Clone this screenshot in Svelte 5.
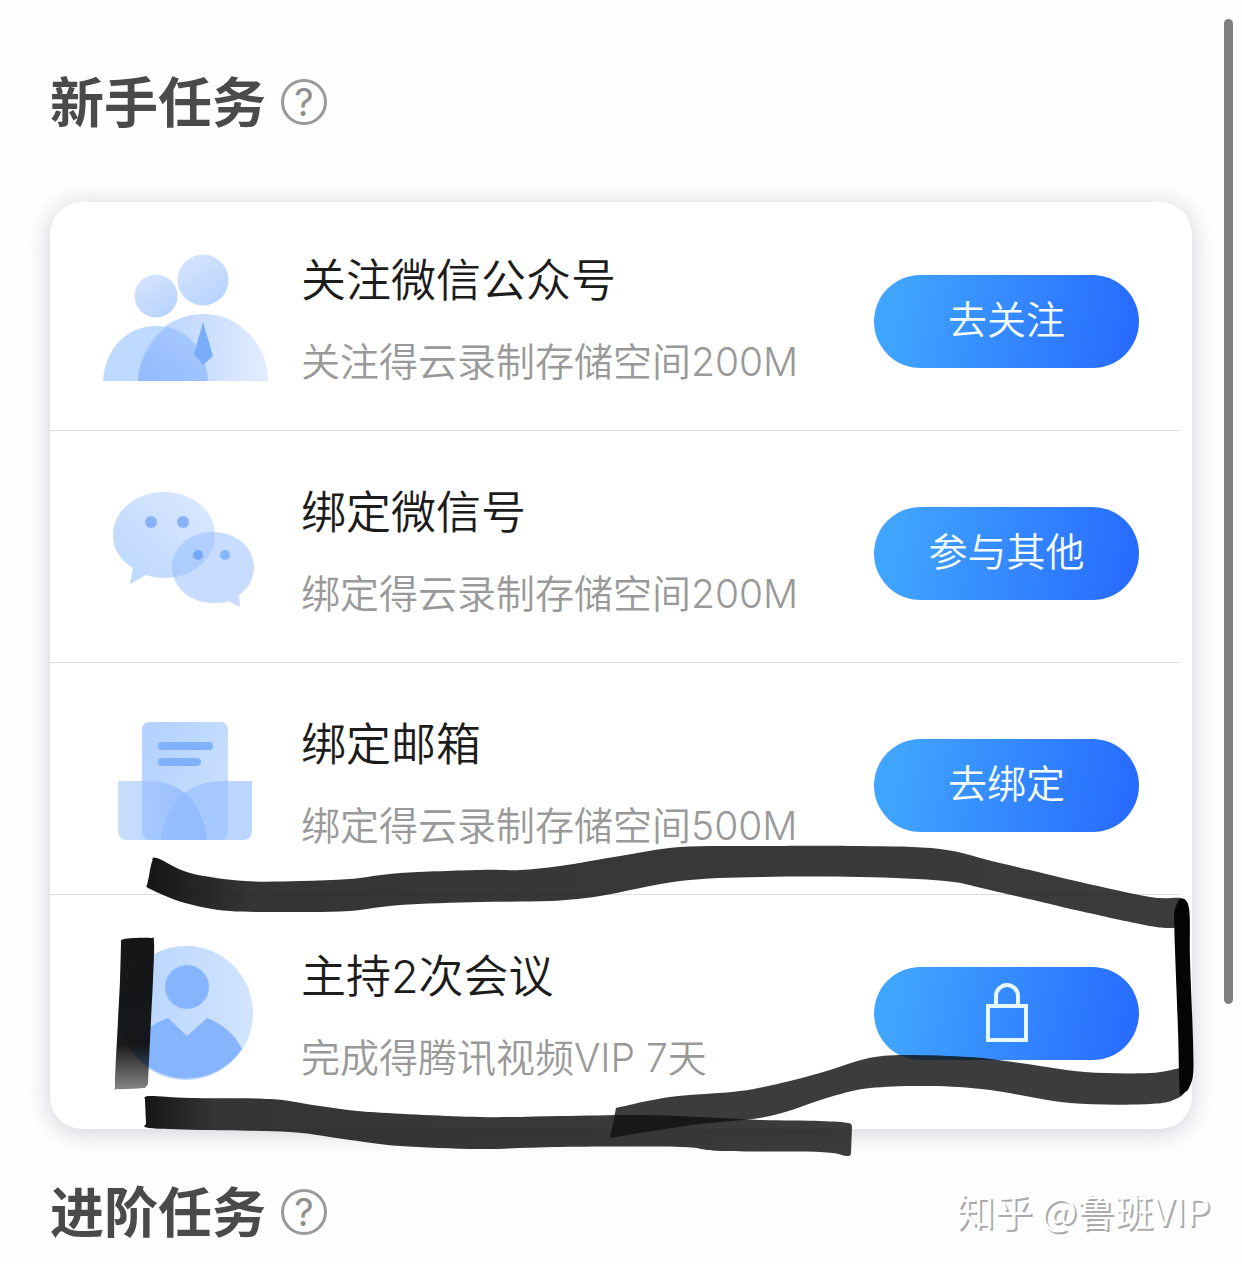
<script lang="ts">
    type Task = {
        icon: "follow" | "wechat" | "mail" | "host";
        title: string;
        reward: string;
        action: string;
        locked?: boolean;
    };

    type Point = [number, number];

    const tasks: Task[] = [
        { icon: "follow", title: "关注微信公众号", reward: "关注得云录制存储空间200M", action: "去关注" },
        { icon: "wechat", title: "绑定微信号", reward: "绑定得云录制存储空间200M", action: "参与其他" },
        { icon: "mail", title: "绑定邮箱", reward: "绑定得云录制存储空间500M", action: "去绑定" },
        { icon: "host", title: "主持2次会议", reward: "完成得腾讯视频VIP 7天", action: "未解锁", locked: true },
    ];

    // runs a smooth curve through all the points of one edge
    function curve(points: Point[]) {
        let d = "";
        for (let i = 0; i < points.length - 1; i++) {
            const a = points[i - 1] ?? points[i];
            const b = points[i];
            const c = points[i + 1];
            const e = points[i + 2] ?? c;
            d += ` C ${b[0] + (c[0] - a[0]) / 6} ${b[1] + (c[1] - a[1]) / 6}`;
            d += ` ${c[0] - (e[0] - b[0]) / 6} ${c[1] - (e[1] - b[1]) / 6} ${c[0]} ${c[1]}`;
        }
        return d;
    }

    // a marker stroke is the area between two edges, there and back
    function stroke(there: Point[], back: Point[]) {
        return `M ${there[0].join(" ")}${curve(there)} L ${back[0].join(" ")}${curve(back)} Z`;
    }

    const topStroke = stroke(
        [[149, 876], [152, 862], [157, 858], [190, 873], [245, 881], [300, 881], [350, 879], [400, 873], [480, 870], [520, 870], [560, 866], [620, 856], [680, 847], [760, 846], [860, 846], [940, 849], [1000, 863], [1080, 882], [1150, 897], [1181, 898], [1188, 905]],
        [[1174, 928], [1150, 926], [1080, 911], [990, 890], [945, 881], [860, 877], [760, 877], [680, 881], [600, 896], [550, 901], [480, 902], [400, 905], [350, 911], [300, 912], [230, 911], [185, 903], [150, 889], [147, 885]],
    );
    const rightStroke = stroke(
        [[1174, 912], [1180, 899], [1189, 908], [1190, 960], [1193, 1040], [1193, 1075], [1188, 1090]],
        [[1180, 1096], [1179, 1072], [1178, 1030], [1175, 950], [1174, 912]],
    );
    const lowerStroke = stroke(
        [[1180, 1068], [1150, 1073], [1085, 1072], [1020, 1063], [970, 1057], [900, 1055], [865, 1059], [830, 1070], [790, 1081], [740, 1091], [670, 1097], [616, 1108]],
        [[610, 1138], [640, 1133], [700, 1124], [770, 1116], [830, 1097], [870, 1088], [930, 1086], [990, 1090], [1070, 1103], [1150, 1104], [1178, 1098], [1189, 1086]],
    );
    const bottomStroke = stroke(
        [[145, 1100], [149, 1096], [190, 1098], [270, 1099], [320, 1106], [370, 1112], [480, 1117], [560, 1116], [640, 1115], [700, 1117], [760, 1120], [820, 1121], [848, 1123], [852, 1127]],
        [[851, 1153], [847, 1156], [820, 1152], [720, 1151], [680, 1147], [560, 1147], [480, 1149], [400, 1146], [350, 1140], [290, 1132], [200, 1130], [149, 1128], [146, 1124]],
    );
    const leftStroke = stroke(
        [[121, 943], [124, 939], [150, 938], [154, 942], [153, 980], [150, 1040], [148, 1084]],
        [[145, 1088], [118, 1089], [115, 1084], [118, 1020], [120, 980], [121, 943]],
    );
</script>

{#snippet heading(text: string)}
    <header class="heading">
        <h2>{text}</h2>
        <button class="help" aria-label="{text}说明">?</button>
    </header>
{/snippet}

{#snippet taskIcon(name: Task["icon"])}
    <svg class="icon" viewBox="0 0 180 152" aria-hidden="true">
        {#if name === "follow"}
            <circle cx="61" cy="51" r="21.5" fill="url(#soft)" />
            <circle cx="108" cy="35" r="25.5" fill="url(#soft)" />
            <path d="M8 136 C10 103 32 81 61 81 C90 81 111 103 113 136 Z" fill="#bfdaff" />
            <path d="M43 136 A65 67 0 0 1 173 136 Z" fill="url(#body)" />
            <path
                d="M43 136 C44 114 56 95 71 82 C95 86 111 106 113 136 Z"
                fill="url(#overlap)"
            />
            <path d="M108 77 L99 109 L108 120 L118 111 Z" fill="#79adfb" />
        {:else if name === "wechat"}
            <path
                d="M69 15 C98 15 120 34 120 58 C120 82 98 101 69 101 C63 101 57 100 51 98 L35 107 L38 91 C25 83 18 72 18 58 C18 34 41 15 69 15 Z"
                fill="url(#bubble)"
            />
            <path
                d="M118 55 C141 55 159 71 159 90 C159 102 153 112 144 118 L145 130 L133 124 C128 126 123 126 118 126 C95 126 77 110 77 90 C77 71 95 55 118 55 Z"
                fill="#8fbaff"
                fill-opacity="0.5"
            />
            <circle cx="56" cy="45" r="6" fill="#86b3fb" />
            <circle cx="88" cy="45" r="6" fill="#86b3fb" />
            <circle cx="103" cy="78" r="5" fill="#76a8fa" />
            <circle cx="130" cy="78" r="5" fill="#86b5fb" />
        {:else if name === "mail"}
            <rect x="47" y="13" width="86" height="118" rx="7" fill="url(#sheet)" />
            <path d="M67 37 H114 M67 53 H102" stroke="#7fb2fa" stroke-width="8" stroke-linecap="round" />
            <path
                d="M23 72 H52 C68 72 80 76 90 84 C101 93 110 109 112 131 H32 Q23 131 23 122 Z"
                fill="url(#flap)"
                fill-opacity="0.6"
            />
            <path
                d="M157 72 H128 C112 72 100 76 90 84 C77 94 68 111 66 131 H148 Q157 131 157 122 Z"
                fill="#8fbaff"
                fill-opacity="0.6"
            />
        {:else}
            <circle cx="91" cy="72" r="67" fill="url(#disc)" />
            <circle cx="92" cy="46" r="22" fill="#86b5fe" />
            <path
                d="M73 77 L92 95 L112 77 C128 83 140 94 147 108 A67 67 0 0 1 36 108 C43 94 56 83 73 77 Z"
                fill="#86b5fe"
            />
        {/if}
    </svg>
{/snippet}

<svg class="defs" aria-hidden="true">
    <defs>
        <linearGradient id="soft" x1="0" y1="0" x2="0.6" y2="1">
            <stop offset="0" stop-color="#d8e6fd" />
            <stop offset="1" stop-color="#b9d4fd" />
        </linearGradient>
        <linearGradient id="body">
            <stop offset="0" stop-color="#b4d0ff" />
            <stop offset="0.6" stop-color="#cfe1ff" />
            <stop offset="1" stop-color="#e2ecff" />
        </linearGradient>
        <linearGradient id="overlap" x1="0" y1="1" x2="1" y2="0">
            <stop offset="0" stop-color="#94baff" />
            <stop offset="1" stop-color="#a9cbfd" />
        </linearGradient>
        <linearGradient id="bubble" x1="1" y1="0" x2="0" y2="1">
            <stop offset="0" stop-color="#dde9ff" />
            <stop offset="1" stop-color="#bad6ff" />
        </linearGradient>
        <linearGradient id="sheet" x1="0" y1="0" x2="1" y2="0.6">
            <stop offset="0" stop-color="#b0d0ff" />
            <stop offset="1" stop-color="#cadfff" />
        </linearGradient>
        <linearGradient id="flap">
            <stop offset="0" stop-color="#a6cbff" />
            <stop offset="1" stop-color="#7ba7ff" />
        </linearGradient>
        <linearGradient id="disc">
            <stop offset="0" stop-color="#b5d3ff" />
            <stop offset="1" stop-color="#d2e4ff" />
        </linearGradient>
    </defs>
</svg>

<main class="page">
    {@render heading("新手任务")}

    <ul class="card">
        {#each tasks as task (task.title)}
            <li class="task">
                {@render taskIcon(task.icon)}
                <div class="info">
                    <h3>{task.title}</h3>
                    <p>{task.reward}</p>
                </div>
                <button class={["action", task.locked && "locked"]} aria-label={task.action}>
                    {#if task.locked}
                        <svg class="lock" viewBox="0 0 44 60" aria-hidden="true">
                            <path d="M11 23 V13 A11 11 0 0 1 33 13 V23" />
                            <rect x="3" y="23" width="38" height="34" />
                        </svg>
                    {:else}
                        {task.action}
                    {/if}
                </button>
            </li>
        {/each}
    </ul>

    {@render heading("进阶任务")}

    <svg class="marker" viewBox="0 0 1242 1264" aria-hidden="true">
        <defs>
            <linearGradient id="ink">
                <stop offset="0" stop-color="#111" stop-opacity="0.98" />
                <stop offset="0.1" stop-color="#111" stop-opacity="0.85" />
                <stop offset="1" stop-color="#111" stop-opacity="0.82" />
            </linearGradient>
            <linearGradient id="bar" x1="0" y1="0" x2="0" y2="1">
                <stop offset="0" stop-color="#0c0c0c" stop-opacity="0.96" />
                <stop offset="0.7" stop-color="#0c0c0c" stop-opacity="0.94" />
                <stop offset="1" stop-color="#111" stop-opacity="0.5" />
            </linearGradient>
        </defs>
        <path d={topStroke} fill="url(#ink)" />
        <path d={lowerStroke} fill="#111" fill-opacity="0.82" />
        <path d={bottomStroke} fill="url(#ink)" />
        <path d={leftStroke} fill="url(#bar)" />
        <path d={rightStroke} fill="#050505" />
    </svg>

    <div class="scrollbar"></div>
    <div class="watermark">知乎 @鲁班VIP</div>
</main>

<style>
    :global(body) {
        margin: 0;
        background: #fefefe;
    }

    .page {
        position: relative;
        box-sizing: border-box;
        padding: 64px 50px 14px;
        font-family: Inter, "Noto Sans CJK SC", sans-serif;
    }

    .defs {
        position: absolute;
        width: 0;
        height: 0;
    }

    .heading {
        display: flex;
        align-items: center;
        gap: 15px;
        height: 76px;
    }

    h2,
    h3,
    p {
        margin: 0;
    }

    h2 {
        padding-top: 4px;
        font-size: 54px;
        line-height: 72px;
        font-weight: 600;
        color: #4a4a4a;
    }

    .help {
        box-sizing: border-box;
        width: 46px;
        height: 46px;
        padding: 0;
        border: 3px solid #999;
        border-radius: 50%;
        background: none;
        font-family: inherit;
        font-size: 38px;
        line-height: 40px;
        font-weight: 400;
        color: #8e8e8e;
    }

    .card {
        margin: 62px 0 45px;
        padding: 0 12px 2px 0;
        list-style: none;
        border-radius: 32px;
        background: #fff;
        box-shadow:
            0 0 24px rgba(40, 44, 60, 0.1),
            0 6px 24px rgba(40, 50, 90, 0.12);
    }

    .task {
        display: flex;
        align-items: center;
        gap: 26px;
        padding: 46px 41px 33px 45px;
        border-bottom: 1px solid #dcdcdc;

        &:first-child {
            padding-top: 43px;
        }

        &:last-child {
            border-bottom-color: transparent;
        }
    }

    .icon {
        flex: none;
        width: 180px;
        height: 152px;
    }

    .info {
        flex: 1;
        display: flex;
        flex-direction: column;
        gap: 21px;
        white-space: nowrap;
    }

    h3 {
        font-size: 45px;
        line-height: 60px;
        font-weight: 350;
        color: #1c1c1c;
    }

    p {
        font-size: 39px;
        line-height: 60px;
        font-weight: 350;
        color: #999;
    }

    .action {
        display: flex;
        align-items: center;
        justify-content: center;
        box-sizing: border-box;
        flex: none;
        width: 265px;
        height: 93px;
        padding: 0 0 8px;
        border: 0;
        border-radius: 47px;
        background: linear-gradient(100deg, #40a5ff 8%, #286cff 95%);
        font-family: inherit;
        font-size: 39px;
        font-weight: 350;
        color: #f4fcff;
    }

    .locked {
        margin-bottom: 8px;
        padding: 0;
    }

    .lock {
        width: 44px;
        height: 60px;
        fill: none;
        stroke: #e6f8ff;
        stroke-width: 4px;
    }

    .marker {
        position: absolute;
        top: 0;
        left: 0;
        width: 100%;
        pointer-events: none;
    }

    .scrollbar {
        position: absolute;
        top: 19px;
        right: 9px;
        width: 9px;
        height: 985px;
        border-radius: 5px;
        background: #808080;
    }

    .watermark {
        position: absolute;
        right: 32px;
        bottom: 28px;
        font-family: "Noto Sans CJK SC", sans-serif;
        font-size: 38px;
        line-height: 52px;
        color: #fff;
        text-shadow: 2px 2px 0 #aaa;
    }
</style>
